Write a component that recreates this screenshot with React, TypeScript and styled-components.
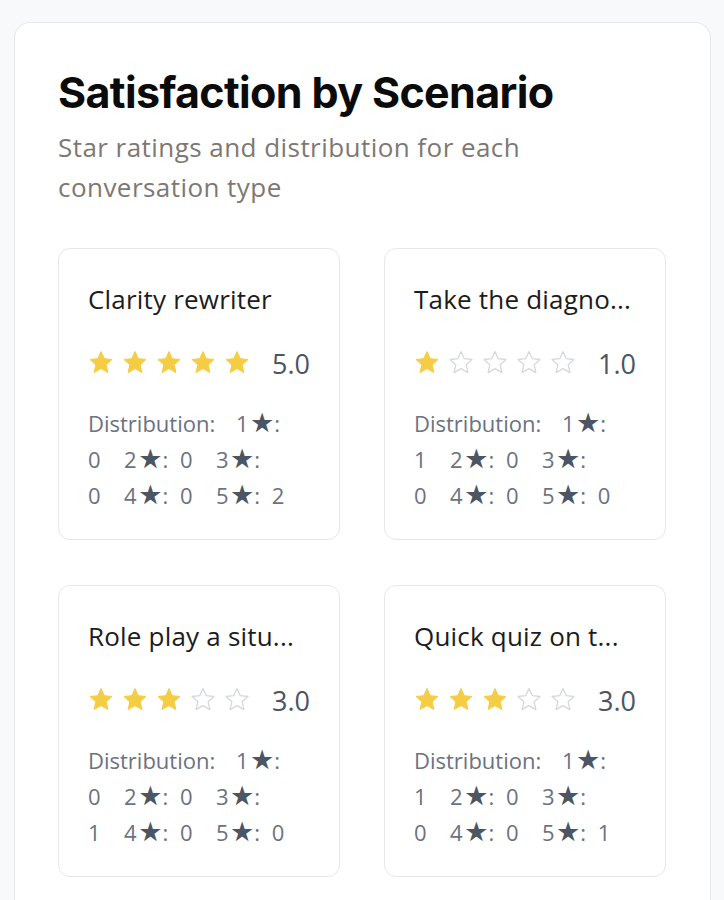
import React from "react";
import styled, { createGlobalStyle } from "styled-components";

const GlobalStyle = createGlobalStyle`
  html, body {
    margin: 0;
    padding: 0;
    background: #f8f9fa;
  }
  * { box-sizing: border-box; }
`;

const Page = styled.div`
  padding: 22px 13px 0 14px;
  font-family: "Open Sans", "DejaVu Sans", sans-serif;
`;

const Panel = styled.section`
  background: #ffffff;
  border: 1px solid #e7e7e7;
  border-bottom: none;
  border-radius: 16px 16px 0 0;
  padding: 44px 44px 40px 43px;
`;

const Title = styled.h1`
  margin: 0;
  font-family: "Inter", "Liberation Sans", sans-serif;
  font-weight: 700;
  font-size: 43px;
  line-height: 50px;
  letter-spacing: -0.015em;
  color: #0b0b0b;
`;

const Subtitle = styled.p`
  margin: 10px 0 0;
  max-width: 480px;
  font-size: 26px;
  line-height: 40px;
  letter-spacing: 0.45px;
  font-weight: 400;
  color: #7d7873;
`;

const Grid = styled.div`
  margin-top: 41px;
  display: grid;
  grid-template-columns: 282px 282px;
  column-gap: 44px;
  row-gap: 45px;
`;

const Card = styled.article`
  height: 292px;
  border: 1px solid #e5e7eb;
  border-radius: 12px;
  padding: 32px 29px 26px 29px;
  display: flex;
  flex-direction: column;
  gap: 24px;
`;

const CardTitle = styled.h3`
  margin: 0;
  font-size: 26px;
  line-height: 36px;
  letter-spacing: 0.2px;
  font-weight: 400;
  color: #1c1c1c;
  white-space: nowrap;
`;

const StarRow = styled.div`
  display: flex;
  align-items: center;
  height: 44px;
  gap: 8px;
  margin: 0 0 -4px;
`;

const RatingValue = styled.span`
  margin-left: auto;
  font-size: 27px;
  color: #4b5563;
`;

const Distribution = styled.div`
  font-size: 22px;
  line-height: 36px;
  word-spacing: 3px;
  color: #6b7280;
`;

const Label = styled.span`
  margin-right: 12px;
`;

const Item = styled.span`
  letter-spacing: 1.5px;
  & + & {
    margin-left: 22px;
  }
`;

const StarGlyph = styled.span`
  color: #4b5563;
  font-family: "DejaVu Sans", sans-serif;
  font-size: 27px;
  line-height: 0;
  letter-spacing: 0;
`;

const STAR_POINTS =
  "13,1.5 16.3,8.7 24,9.5 18.2,14.8 19.9,22.6 13,18.6 6.1,22.6 7.8,14.8 2,9.5 9.7,8.7";

const Star: React.FC<{ filled: boolean }> = ({ filled }) => (
  <svg width="26" height="26" viewBox="0 0 26 26" aria-hidden>
    {filled ? (
      <polygon points={STAR_POINTS} fill="#f5cd45" stroke="#f5cd45" strokeWidth="1" strokeLinejoin="round" />
    ) : (
      <polygon points={STAR_POINTS} fill="none" stroke="#d5d8de" strokeWidth="1.3" strokeLinejoin="round" />
    )}
  </svg>
);

type Scenario = { name: string; rating: number; dist: number[] };

const scenarios: Scenario[] = [
  { name: "Clarity rewriter", rating: 5, dist: [0, 0, 0, 0, 2] },
  { name: "Take the diagno...", rating: 1, dist: [1, 0, 0, 0, 0] },
  { name: "Role play a situ...", rating: 3, dist: [0, 0, 1, 0, 0] },
  { name: "Quick quiz on t...", rating: 3, dist: [1, 0, 0, 0, 1] },
];

const App: React.FC = () => (
  <>
    <GlobalStyle />
    <Page>
      <Panel>
        <Title>Satisfaction by Scenario</Title>
        <Subtitle>Star ratings and distribution for each conversation type</Subtitle>
        <Grid>
          {scenarios.map((s) => (
            <Card key={s.name}>
              <CardTitle>{s.name}</CardTitle>
              <StarRow>
                {[1, 2, 3, 4, 5].map((n) => (
                  <Star key={n} filled={n <= s.rating} />
                ))}
                <RatingValue>{s.rating.toFixed(1)}</RatingValue>
              </StarRow>
              <Distribution>
                <Label>Distribution:</Label>{" "}
                {s.dist.map((c, i) => (
                  <Item key={i}>
                    {i + 1}
                    <StarGlyph>★</StarGlyph>: {c}
                  </Item>
                ))}
              </Distribution>
            </Card>
          ))}
        </Grid>
      </Panel>
    </Page>
  </>
);

export default App;
